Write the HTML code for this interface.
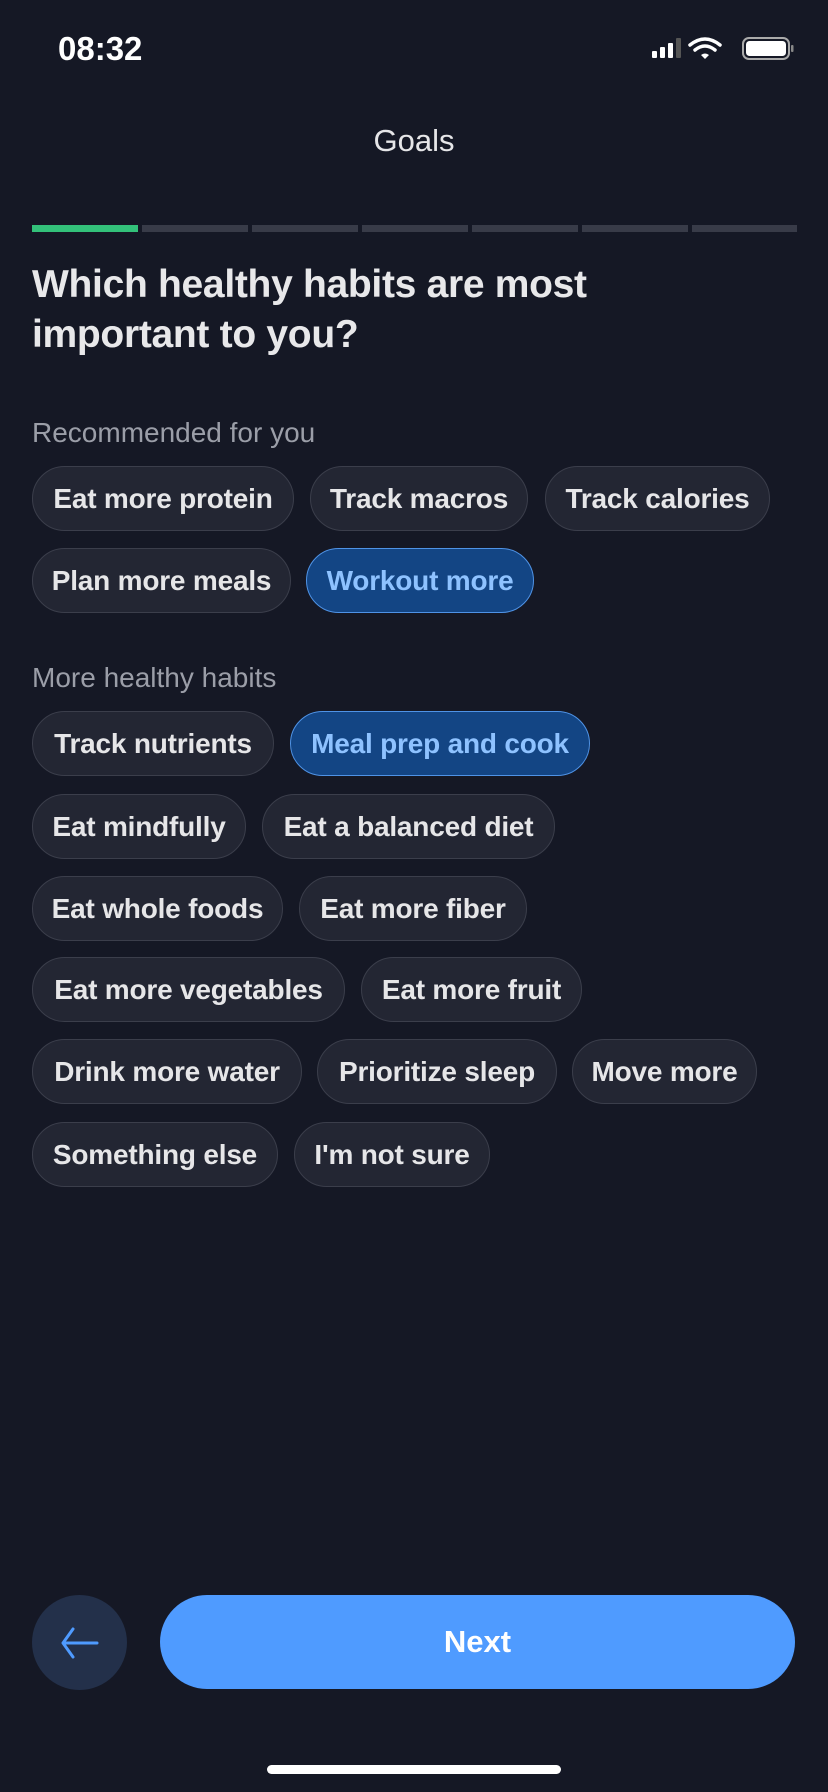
<!DOCTYPE html>
<html><head><meta charset="utf-8"><style>
*{margin:0;padding:0;box-sizing:border-box}
body{width:828px;height:1792px;background:#151825;font-family:"Liberation Sans",sans-serif;color:#e8e8ea;position:relative;overflow:hidden}
.a{position:absolute}
.chip{position:absolute;height:65px;border-radius:33px;background:#232633;border:1.5px solid #3b3e4b;font-weight:bold;font-size:28px;letter-spacing:-0.2px;display:flex;align-items:center;justify-content:center;color:#e6e6e8;white-space:nowrap}
.sel{background:#134584;border-color:#4f93e6;color:#8ec2ff}
.seg{position:absolute;top:225px;height:7px;width:106px;background:#383b48}
.lbl{font-size:28px;color:#9b9ea8}
</style></head><body>
<div class="a" style="left:58px;top:30px;font-size:33px;font-weight:bold;color:#fff">08:32</div>
<svg class="a" style="left:650px;top:36px" width="145" height="28" viewBox="0 0 145 28">
<rect x="2" y="15" width="5" height="7" rx="1" fill="#fff"/><rect x="10" y="11" width="5" height="11" rx="1" fill="#fff"/><rect x="18" y="7" width="5" height="15" rx="1" fill="#fff"/><rect x="26" y="2" width="5" height="20" rx="1" fill="#555"/>
<path d="M40 9 Q55 -3 70 9" stroke="#fff" stroke-width="3.5" fill="none" stroke-linecap="round"/><path d="M45 14 Q55 6 65 14" stroke="#fff" stroke-width="3.5" fill="none" stroke-linecap="round"/><path d="M51 19 L55 23 L59 19 Q55 16 51 19Z" fill="#fff"/>
<rect x="93" y="2" width="46" height="21" rx="6" stroke="#aaa" stroke-width="2" fill="none"/><rect x="96" y="5" width="40" height="15" rx="3.5" fill="#fff"/><rect x="141" y="9" width="2.5" height="7" rx="1" fill="#888"/>
</svg>
<div class="a" style="left:0;width:828px;top:123px;text-align:center;font-size:31px;color:#e6e6e8">Goals</div>
<div class="seg" style="left:32px;background:#33c17a"></div>
<div class="seg" style="left:142px"></div><div class="seg" style="left:252px"></div><div class="seg" style="left:362px"></div><div class="seg" style="left:472px"></div><div class="seg" style="left:582px"></div><div class="seg" style="left:692px;width:105px"></div>
<div class="a" style="left:32px;top:260px;font-size:39px;font-weight:bold;line-height:50px;letter-spacing:-0.3px;color:#e8e8ea">Which healthy habits are most<br>important to you?</div>
<div class="a lbl" style="left:32px;top:417px">Recommended for you</div>
<div class="chip" style="left:32px;top:466px;width:262px">Eat more protein</div>
<div class="chip" style="left:310px;top:466px;width:218px">Track macros</div>
<div class="chip" style="left:545px;top:466px;width:225px">Track calories</div>
<div class="chip" style="left:32px;top:548px;width:259px">Plan more meals</div>
<div class="chip sel" style="left:306px;top:548px;width:228px">Workout more</div>
<div class="a lbl" style="left:32px;top:662px">More healthy habits</div>
<div class="chip" style="left:32px;top:711px;width:242px">Track nutrients</div>
<div class="chip sel" style="left:290px;top:711px;width:300px">Meal prep and cook</div>
<div class="chip" style="left:32px;top:794px;width:214px">Eat mindfully</div>
<div class="chip" style="left:262px;top:794px;width:293px">Eat a balanced diet</div>
<div class="chip" style="left:32px;top:876px;width:251px">Eat whole foods</div>
<div class="chip" style="left:299px;top:876px;width:228px">Eat more fiber</div>
<div class="chip" style="left:32px;top:957px;width:313px">Eat more vegetables</div>
<div class="chip" style="left:361px;top:957px;width:221px">Eat more fruit</div>
<div class="chip" style="left:32px;top:1039px;width:270px">Drink more water</div>
<div class="chip" style="left:317px;top:1039px;width:240px">Prioritize sleep</div>
<div class="chip" style="left:572px;top:1039px;width:185px">Move more</div>
<div class="chip" style="left:32px;top:1122px;width:246px">Something else</div>
<div class="chip" style="left:294px;top:1122px;width:196px">I'm not sure</div>
<div class="a" style="left:32px;top:1595px;width:95px;height:95px;border-radius:50%;background:#23304a"></div>
<svg class="a" style="left:58px;top:1626px" width="42" height="34" viewBox="0 0 42 34"><path d="M39 17 H5 M15 3 L5 17 L15 31" stroke="#4f9bff" stroke-width="3" fill="none" stroke-linecap="round" stroke-linejoin="round"/></svg>
<div class="a" style="left:160px;top:1595px;width:635px;height:94px;border-radius:47px;background:#4f9bff;color:#fff;font-size:31px;font-weight:bold;display:flex;align-items:center;justify-content:center">Next</div>
<div class="a" style="left:267px;top:1765px;width:294px;height:9px;border-radius:5px;background:#fff"></div>
</body></html>
